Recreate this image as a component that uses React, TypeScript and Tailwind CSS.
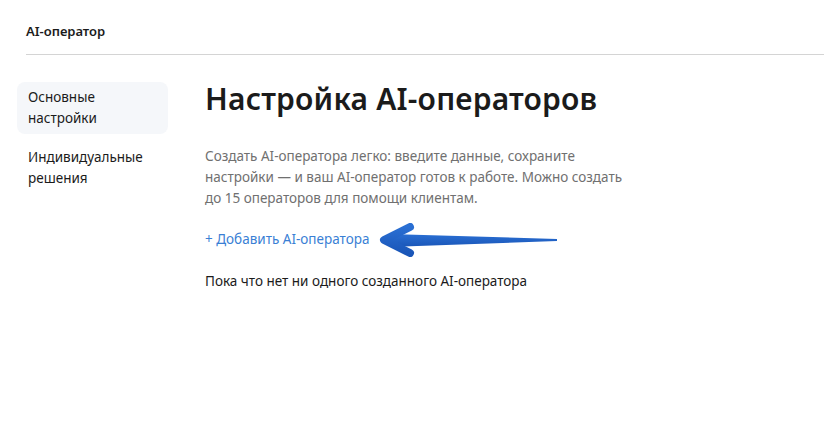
import React from "react";

function Arrow() {
  return (
    <svg width="181" height="34" viewBox="0 0 181 34" className="shrink-0">
      <defs>
        <linearGradient id="arrowFill" x1="0" y1="0" x2="0" y2="1">
          <stop offset="0" stopColor="#2a6fd3" />
          <stop offset="1" stopColor="#1a56b8" />
        </linearGradient>
      </defs>
      {/* shaft */}
      <path d="M10 11 L178 16 L178 18 L10 24 Z" fill="url(#arrowFill)" />
      {/* head */}
      <path
        d="M31 4 L5 17 L31 30"
        fill="none"
        stroke="url(#arrowFill)"
        strokeWidth={8}
        strokeLinecap="round"
        strokeLinejoin="round"
      />
    </svg>
  );
}

export default function App() {
  return (
    <div
      className="min-h-[432px] w-[824px] bg-white text-[#1b1b1b]"
      style={{fontFamily: '"Noto Sans", "Open Sans", sans-serif'}}
    >
      <div className="pl-[26px]">
        <div className="flex h-[55px] items-center border-b border-[#d4d4d4] pt-[10px] text-[13px] font-semibold">
          AI-оператор
        </div>
      </div>

      <div className="flex">
        {/* Sidebar */}
        <div className="flex w-[205px] shrink-0 flex-col gap-[8px] pl-[17px] pt-[27px]">
          <div className="w-[151px] rounded-lg bg-[#f5f7fa] px-[11px] py-[5px] text-[13.5px] leading-[21px]">
            Основные
            <br />
            настройки
          </div>
          <div className="w-[151px] px-[11px] py-[5px] text-[13.5px] leading-[21px]">
            Индивидуальные
            <br />
            решения
          </div>
        </div>

        {/* Main */}
        <div className="flex flex-col pt-[24px]">
          <h1 className="text-[30px] font-semibold leading-[40px] tracking-[0.2px]">
            Настройка AI-операторов
          </h1>
          <p className="mt-[27px] w-[436px] text-[13.5px] leading-[21px] text-[#707070]">
            Создать AI-оператора легко: введите данные, сохраните настройки — и ваш AI-оператор готов к
            работе. Можно создать до 15 операторов для помощи клиентам.
          </p>
          <div className="mt-[20px] flex h-[21px] items-center gap-[10px]">
            <a className="cursor-pointer text-[13.5px] leading-[21px] text-[#3a7fd5]">
              + Добавить AI-оператора
            </a>
            <Arrow />
          </div>
          <p className="mt-[21px] text-[13.5px] leading-[21px]">
            Пока что нет ни одного созданного AI-оператора
          </p>
        </div>
      </div>
    </div>
  );
}
